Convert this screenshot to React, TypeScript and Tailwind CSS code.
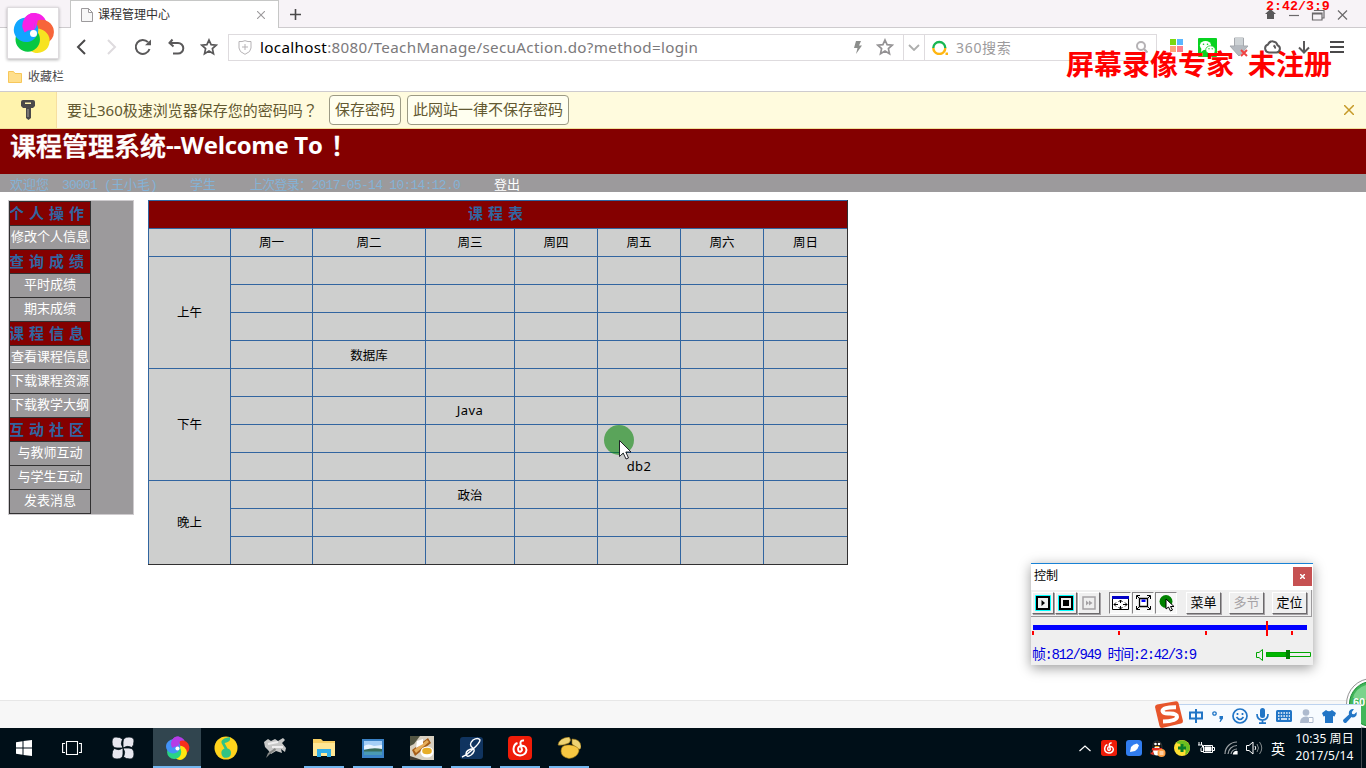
import React from "react";
import type { ReactNode } from "react";

const YAHEI = "font-['Noto_Sans','Noto_Sans_CJK_SC',sans-serif]";
const SONG = "font-['Liberation_Mono','Noto_Sans_CJK_SC',monospace]";

function Slot({ w, children }: { w: string; children?: ReactNode }) {
  return <div className={`${w} h-full shrink-0 flex items-center justify-center`}>{children}</div>;
}

/* Pinwheel logo: wide round petals, each lying over the one before it. */
function Pinwheel({ size, colors }: { size: number; colors: string[] }) {
  return (
    <svg width={size} height={size} viewBox="-22 -22 44 44">
      {colors.map((c, i) => (
        <circle key={c} cy="-8.5" r="12.5" fill={c} transform={`rotate(${8 + i * (360 / colors.length)})`} />
      ))}
      <path d="M0 -21 A12.500 12.500 0 0 0 -9 .2 Q-5 -4 0 -3 Z" fill={colors[0]} transform="rotate(8)" />
      <path d="M0 -21 Q5 -12 0 -3Z" fill={colors[0]} transform="rotate(8)" />
      <circle r="3.6" fill="#fff" />
    </svg>
  );
}

function Star({ color }: { color: string }) {
  return (
    <svg width="18" height="18" viewBox="0 0 18 18" fill="none" stroke={color} strokeWidth="1.7">
      <path d="M9 2 L11.1 6.7 L16.2 7.2 L12.4 10.6 L13.5 15.7 L9 13.1 L4.5 15.7 L5.6 10.6 L1.8 7.2 L6.9 6.7Z" />
    </svg>
  );
}

function TabStrip() {
  return (
    <div className="h-[28px] shrink-0 flex bg-[#f7f3f7]">
      <div className="w-[70px] border-b border-[#cecbce]" />
      <div className="w-[209px] bg-white border-t border-x border-[#c6c7c6] flex items-center pl-[10px]">
        <svg width="12" height="14" viewBox="0 0 12 14" fill="#f7f7f7" stroke="#9c9a9c">
          <path d="M.5 .5 H7.5 L11.5 4.5 V13.5 H.5Z M7.5 .5 V4.5 H11.5" />
        </svg>
        <span className={`${YAHEI} ml-[5px] w-[159px] text-[12px] text-[#313031]`}>课程管理中心</span>
        <svg className="mt-px" width="8" height="8" viewBox="0 0 8 8" stroke="#9c9a9c" strokeWidth="1.1"><path d="M0 0 L8 8 M8 0 L0 8" /></svg>
      </div>
      <div className="flex-1 border-b border-[#cecbce] flex items-center pl-[11px] pt-px">
        <svg width="11" height="11" viewBox="0 0 11 11" stroke="#4a494a" strokeWidth="1.6"><path d="M5.5 0 V11 M0 5.500 H11" /></svg>
        <div className="w-[964px]" />
        <svg className="mt-[2px]" width="84" height="14" viewBox="0 0 84 14" fill="none" stroke="#6b696b" strokeWidth="1.2">
          <path d="M0 6 L5.500 1 L11 6 H9 V11 H2 V6Z" fill="#5a595a" stroke="none" />
          <path d="M24 7.5 H34" />
          <path d="M47.5 5 H57 V12 H47.5Z M47.5 6 H57 M49.5 3 V2.5 H59 V10 H57.5" />
          <path d="M73 2.5 L82 11.5 M82 2.5 L73 11.5" />
        </svg>
      </div>
    </div>
  );
}

function Toolbar() {
  return (
    <div className="h-[38px] shrink-0 flex items-center pl-[66px]">
      <Slot w="w-[30px]"><svg width="12" height="16" viewBox="0 0 12 16" fill="none" stroke="#4a494a" strokeWidth="2"><path d="M10 1 L3 8 L10 15" /></svg></Slot>
      <Slot w="w-[31px]"><svg width="12" height="16" viewBox="0 0 12 16" fill="none" stroke="#dedbde" strokeWidth="2"><path d="M2 1 L9 8 L2 15" /></svg></Slot>
      <Slot w="w-[32px]">
        <svg width="18" height="18" viewBox="0 0 18 18" fill="none" stroke="#5a595a" strokeWidth="2"><path d="M15.5 11 A7 7 0 1 1 14 4.2" /><path d="M17 1.5 V7.2 H11Z" fill="#5a595a" stroke="none" /></svg>
      </Slot>
      <Slot w="w-[34px]">
        <svg width="18" height="18" viewBox="0 0 18 18" fill="none" stroke="#5a595a" strokeWidth="2"><path d="M5.5 1.5 L2.5 5 L6.5 8.5 M2.5 5 H11 A5.3 5.3 0 0 1 11 15.6 H6" /></svg>
      </Slot>
      <Slot w="w-[31px]"><Star color="#5a595a" /></Slot>
      <div className="ml-[4px] w-[929px] h-[27px] border border-[#dedbde] flex items-center">
        <Slot w="w-[31px]">
          <svg width="14" height="15" viewBox="0 0 14 15" fill="none" stroke="#b5b2b5"><path d="M1 1.5 Q4 2 7 .7 Q10 2 13 1.5 V8 Q13 12 7 14.3 Q1 12 1 8Z M4 7 H10 M7 4 V10" /></svg>
        </Slot>
        <div className={`${YAHEI} w-[583px] h-full flex items-center pb-px whitespace-nowrap text-[15.200px] tracking-[0.330px] leading-[24px] text-[#7b797b]`}>
          <span><span className="text-black">localhost</span>:8080/TeachManage/secuAction.do?method=login</span>
        </div>
        <Slot w="w-[30px]"><svg width="8" height="13" viewBox="0 0 8 13" fill="#8c8e8c"><path d="M2 0 H7 L5 4.5 H8 L2 13 L3.5 7 H0Z" /></svg></Slot>
        <Slot w="w-[24px]"><Star color="#949294" /></Slot>
        <div className="ml-[6px] w-[22px] h-full border-x border-[#dedbde] flex items-center justify-center">
          <svg width="12" height="7" viewBox="0 0 12 7" fill="none" stroke="#adaead" strokeWidth="1.8"><path d="M1 1 L6 6 L11 1" /></svg>
        </div>
        <Slot w="w-[30px]">
          <svg width="16" height="15" viewBox="0 0 16 15" fill="none" strokeWidth="2.4"><path d="M1.3 8 A6 6 0 1 1 13.3 8" stroke="#18b652" /><path d="M1.3 8 A6 6 0 0 0 13.3 8" stroke="#ffb610" /><path d="M13.5 12.5 H16 V15 H13.5Z" fill="#ffb610" /></svg>
        </Slot>
        <div className={`${YAHEI} w-[174px] h-full flex items-center pl-px text-[14px] tracking-[0.7px] text-[#9c9a9c]`}>360搜索</div>
        <Slot w="w-[25px]"><svg width="12" height="12" viewBox="0 0 12 12" fill="none" stroke="#b5b2b5" strokeWidth="2"><circle cx="5" cy="5" r="4" /><path d="M8 8 L11.5 11.5" /></svg></Slot>
      </div>
      <Slot w="w-[39px]">
        <svg className="mb-[3px]" width="14" height="14" viewBox="0 0 14 14"><path d="M0 0H6V6H0Z" fill="#7bd710" /><path d="M7 0H13V6H7Z" fill="#5ab6ff" /><path d="M0 7H6V13H0Z" fill="#ffa67b" /><path d="M7 7H13V13H7Z" fill="#ff7d8c" /></svg>
      </Slot>
      <Slot w="w-[23px]">
        <svg width="19" height="19" viewBox="0 0 19 19" fill="#fff"><rect width="19" height="19" rx="1" fill="#08d321" /><ellipse cx="7.5" cy="7.5" rx="5.6" ry="4.6" /><path d="M3.5 10 L3 14 L7 11Z" /><ellipse cx="12.5" cy="11.8" rx="4.8" ry="4" stroke="#08d321" strokeWidth=".8" /><path d="M14 14 L16 17 L16.5 13Z" /><g fill="#08d321"><circle cx="5.5" cy="6.3" r=".8" /><circle cx="9.5" cy="6.3" r=".8" /><circle cx="11" cy="10.8" r=".7" /><circle cx="14.2" cy="10.8" r=".7" /></g></svg>
      </Slot>
      <Slot w="w-[40px]">
        <svg width="20" height="20" viewBox="0 0 20 20"><path d="M5.5 1 H14.5 V9 H19 L10 19 L1 9 H5.5Z" fill="#b5bac0" stroke="#a5a8ad" /><path d="M6 1 H14 V8 H6Z" fill="#ced3d6" /><path d="M12 13 L18 19 M18 13 L12 19" stroke="#ef4142" strokeWidth="2" /></svg>
      </Slot>
      <Slot w="w-[27px]">
        <svg width="18" height="16" viewBox="0 0 18 16" fill="none" stroke="#5a595a" strokeWidth="2"><path d="M5 13.5 H12.5 A3.8 3.8 0 0 0 13.5 6.2 A5 5 0 0 0 4 5.5 A4.1 4.1 0 0 0 5 13.5Z M11 9.500 Q11.500 7.500 9.500 6.500" /></svg>
      </Slot>
      <Slot w="w-[36px]"><svg width="12" height="14" viewBox="0 0 12 14" fill="none" stroke="#5a595a" strokeWidth="2"><path d="M6 1 V12 M1 7.5 L6 12.5 L11 7.5" /></svg></Slot>
      <Slot w="w-[30px]"><svg width="14" height="12" viewBox="0 0 14 12" stroke="#4a494a" strokeWidth="2"><path d="M0 1 H14 M0 6 H14 M0 11 H14" /></svg></Slot>
    </div>
  );
}

function PasswordBar() {
  const btn = "h-[30px] rounded-[4px] border border-[#9c9a84] bg-[#fffff0] flex items-center justify-center pb-[2px]";
  return (
    <div className={`${YAHEI} h-[37px] shrink-0 flex items-center bg-[#fffbde] border-b border-[#efdf9c] text-[15px] text-[#635931]`}>
      <div className="w-[57px] h-full bg-[#fff3ad] border-r border-[#f7dfa0] flex items-center justify-center">
        <svg width="14" height="20" viewBox="0 0 14 20" fill="#4a494a"><path d="M2 0 H12 Q14 0 14 2 V6 L12 8 H10 V18 L7.500 20 L5 18 V8 H2 L0 6 V2 Q0 0 2 0Z" /><path d="M4 2.500 H10 V4 H4Z" fill="#fff3ad" /><path d="M7 9 V17" stroke="#a5a29c" /></svg>
      </div>
      <span className="w-[262px] pl-[10px] whitespace-nowrap">要让360极速浏览器保存您的密码吗<span className="font-['Noto_Sans_CJK_TC',sans-serif]">？</span></span>
      <div className={`${btn} w-[72px] ml-[10px]`}>保存密码</div>
      <div className={`${btn} w-[162px] ml-[6px]`}>此网站一律不保存密码</div>
      <div className="flex-1" />
      <svg className="mr-[12px]" width="10" height="10" viewBox="0 0 10 10" stroke="#c69a29" strokeWidth="1.5"><path d="M0 0 L10 10 M10 0 L0 10" /></svg>
    </div>
  );
}

const MENU: [string, string[]][] = [
  ["个人操作", ["修改个人信息"]],
  ["查询成绩", ["平时成绩", "期末成绩"]],
  ["课程信息", ["查看课程信息", "下载课程资源", "下载教学大纲"]],
  ["互动社区", ["与教师互动", "与学生互动", "发表消息"]],
];

function SideMenu() {
  return (
    <div className={`${SONG} w-[126px] h-[315px] bg-[#9c9a9c] border border-[#cecbce]`}>
      <div className="w-[82px] border-t border-x border-[#313031]">
        {MENU.map(([head, items]) => (
          <div key={head}>
            <div className="h-[24px] pt-[2px] bg-[#840000] border-b border-[#313031] text-[15px] leading-[24px] font-bold tracking-[5px] text-[#3165a0] whitespace-nowrap overflow-hidden"><span className="-ml-px">{head}</span></div>
            {items.map((t) => (
              <div key={t} className="h-[24px] pt-px border-b border-[#313031] text-center text-[13px] leading-[22px] text-white whitespace-nowrap">{t}</div>
            ))}
          </div>
        ))}
      </div>
    </div>
  );
}

const DAYS = ["周一", "周二", "周三", "周四", "周五", "周六", "周日"];
const PARTS: { name: string; span: string; rows: string[][] }[] = [
  { name: "上午", span: "row-span-4", rows: [[], [], [], ["", "数据库"]] },
  { name: "下午", span: "row-span-4", rows: [[], ["", "", "Java"], [], ["", "", "", "", "db2"]] },
  { name: "晚上", span: "row-span-3", rows: [["", "", "政治"], [], []] },
];

function Timetable() {
  const cell = "border-l border-t border-[#3165a0] flex items-center justify-center";
  return (
    <div className="ml-[14px] grid w-[700px] h-[365px] grid-cols-[82px_82px_113px_89px_83px_83px_83px_84px] auto-rows-[28px] border-r border-b border-[#313031] bg-[#cecfce] font-['DejaVu_Sans','Noto_Sans_CJK_SC',sans-serif] text-[12.5px] text-black">
      <div className={`${cell} pb-px col-span-8 bg-[#840000] text-[15px] font-bold tracking-[5px] text-[#3165a0]`}>课程表</div>
      <div className={cell} />
      {DAYS.map((d) => <div key={d} className={`${cell} pt-px`}>{d}</div>)}
      {PARTS.map((p) => (
        <React.Fragment key={p.name}>
          <div className={`${cell} pt-px ${p.span}`}>{p.name}</div>
          {p.rows.map((r, i) => DAYS.map((d, j) => {
            const t = r[j] || "";
            return <div key={`${i}${d}`} className={`${cell} ${/^[A-Za-z]/.test(t) ? "text-[13px] font-['Noto_Sans',sans-serif] tracking-[0.4px]" : "pt-[3px]"}`}>{t}</div>;
          }))}
        </React.Fragment>
      ))}
    </div>
  );
}

const raised = "border border-t-white border-l-white border-r-[#6b696b] border-b-[#6b696b] shadow-[1px_1px_0_#a5a2a5]";
const sunken = "border border-t-[#848284] border-l-[#848284] border-r-white border-b-white bg-[#f7f7f7]";

function Recorder() {
  const tb = "w-[22px] h-[22px] mr-px flex items-center justify-center";
  const wide = "w-[35px] h-[22px] flex items-center justify-center pt-[2px] text-[13px]";
  return (
    <div className={`${SONG} absolute left-[1031px] top-[563px] w-[282px] h-[102px] flex flex-col bg-[#efefef] border-t border-[#1882d6] shadow-[0_3px_12px_rgba(0,0,0,0.4)]`}>
      <div className={`${YAHEI} h-[26px] shrink-0 bg-white flex items-center justify-between pl-[3px] pr-px pb-[2px] text-[12px] text-black`}>
        <span>控制</span>
        <div className="w-[19px] h-[19px] bg-[#c65152] flex items-center justify-center">
          <svg width="5" height="5" viewBox="0 0 5 5" stroke="#fff" strokeWidth="1.500"><path d="M0 0 L5 5 M5 0 L0 5" /></svg>
        </div>
      </div>
      <div className="h-[27px] shrink-0 mr-px flex items-center pl-px pb-px border-b border-r border-[#9c9a9c] text-black">
        <div className={`${tb} ${raised}`}><svg width="16" height="16" viewBox="0 0 16 16" fill="none" stroke="#000" strokeWidth="2"><path d="M.5 .5H15.500V15.500H.5Z" stroke="#0ff" strokeWidth="1" /><path d="M2 2H14V14H2Z" /><path d="M6.500 5 L10 8 L6.500 11Z" fill="#000" stroke="none" /></svg></div>
        <div className={`${tb} ${raised}`}><svg width="16" height="16" viewBox="0 0 16 16" fill="none" stroke="#000" strokeWidth="2"><path d="M.5 .5H15.500V15.500H.5Z" stroke="#0ff" strokeWidth="1" /><path d="M2 2H14V14H2Z" /><path d="M5 5 H11 V11 H5Z" fill="#000" stroke="none" /></svg></div>
        <div className={`${tb} ${raised}`}><svg width="16" height="16" viewBox="0 0 16 16" fill="none" stroke="#a5a2a5" strokeWidth="1.500"><path d="M2 2H14V14H2Z" /><path d="M5 5.500 L8 8 L5 10.500Z M8 5.500 L11.500 8 L8 10.500Z" fill="#a5a2a5" stroke="none" /></svg></div>
        <div className={`${tb} ${sunken} ml-[8px]`}><svg width="17" height="14" viewBox="0 0 17 14" fill="none" stroke="#000" strokeWidth="1"><path d="M.5 .5 H16.500 V13.500 H.5Z" fill="#fff" /><path d="M0 0 H17 V3 H0Z" fill="#0000c6" stroke="none" /><path d="M8.500 4 V7 M8.500 10 V13 M2 8.500 H6 M11 8.500 H15 M4 6.500 L2 8.500 L4 10.500 M13 6.500 L15 8.500 L13 10.500 M6.500 6 L8.500 4 L10.500 6 M6.500 11 L8.500 13 L10.500 11" /></svg></div>
        <div className={`${tb} ${sunken}`}><svg width="15" height="15" viewBox="0 0 15 15" fill="none" stroke="#000" strokeWidth="1"><path d="M3.500 3.500 H11.500 V11.500 H3.500Z" fill="#fff" strokeWidth="1.300" /><path d="M5.500 4.500H9.500V7H5.500Z" fill="#00f" stroke="none" /><path d="M.5 4 V.5 H4 M11 .5 H14.500 V4 M14.500 11 V14.500 H11 M4 14.500 H.5 V11 M1 1 L3 3 M14 1 L12 3 M1 14 L3 12 M14 14 L12 12" /></svg></div>
        <div className={`${tb} ${sunken}`}><svg className="ml-px" width="18" height="18" viewBox="0 0 18 18"><circle cx="8" cy="7.500" r="6.500" fill="#008200" /><path d="M8 5 V15 L10.500 13 L12.500 17 L14.500 16 L12.500 12.500 H16Z" fill="#fff" stroke="#000" /></svg></div>
        <div className={`${wide} ${raised} ml-[8px]`}>菜单</div>
        <div className={`${wide} ${raised} ml-[8px] text-[#a5a2a5]`}>多节</div>
        <div className={`${wide} ${raised} ml-[8px]`}>定位</div>
      </div>
      <svg className="mt-[4px] ml-px shrink-0" width="278" height="16" viewBox="0 0 278 16">
        <path d="M1 4H275V9H1Z" fill="#00f" />
        <path d="M0 10H2V14H0Z M86 10H88V14H86Z M173 10H175V14H173Z M259 10H261V14H259Z M234 0H236V15H234Z" fill="#f00" />
      </svg>
      <div className="flex-1 flex items-center justify-between pl-px pr-[2px] pt-[7px]">
        <span className="text-[14px] tracking-[-1.4px] text-[#0000e0] whitespace-pre leading-none">帧:812/949 时间:2:42/3:9</span>
        <svg width="55" height="12" viewBox="1 0 55 12" fill="none" stroke="#00a600"><path d="M1.500 3.500 H4 L7.500 .5 V11.500 L4 8.500 H1.500Z" /><path d="M11.500 3.500H55.500V7.500H11.500Z" /><path d="M11.500 3.500H31V7.500H11.500Z" fill="#00b600" /><path d="M31 1H35V10H31Z" fill="#008200" stroke="none" /></svg>
      </div>
    </div>
  );
}

function ImeBar() {
  return (
    <>
      <svg className="absolute left-[1344px] top-[676px]" width="22" height="52" viewBox="0 0 22 52">
        <circle cx="28" cy="28" r="25.500" fill="#fff" stroke="#949294" />
        <circle cx="28" cy="28" r="22.500" fill="#42b65a" stroke="#188a31" />
        <path d="M9 22 A20 18 0 0 1 22 9 V24Z" fill="#7bd38c" />
        <text x="9" y="30" fontSize="11" fill="#fff" fontWeight="bold" fontFamily="Liberation Sans">60</text>
      </svg>
      <div className="absolute left-[1160px] top-[704px] w-[201px] h-[24px] flex items-center bg-[#f7fbff] border-t border-[#bdd3ef] pl-[25px] pb-px text-[#2175c6]">
        <Slot w="w-[22px]"><svg width="14" height="14" viewBox="0 0 14 14" fill="none" stroke="currentColor" strokeWidth="2"><path d="M1 3.500H13V9.500H1Z M7 0V14" /></svg></Slot>
        <Slot w="w-[22px]"><svg width="12" height="12" viewBox="0 0 12 12" fill="none" stroke="currentColor" strokeWidth="1.300"><circle cx="2.500" cy="3.500" r="1.700" /><path d="M7.500 6 H11 V8.500 L8.500 12 H7.500 L8.500 9 H7.500Z" fill="currentColor" stroke="none" /></svg></Slot>
        <Slot w="w-[22px]"><svg width="16" height="16" viewBox="0 0 16 16" fill="none" stroke="currentColor" strokeWidth="1.700"><circle cx="8" cy="8" r="7" /><path d="M4.500 9 Q8 14 11.500 9 M5.500 5 V7 M10.500 5 V7" /></svg></Slot>
        <Slot w="w-[22px]"><svg width="13" height="16" viewBox="0 0 13 16" fill="none" stroke="currentColor" strokeWidth="1.700"><rect x="4" y="0" width="5" height="10" rx="2.500" fill="currentColor" stroke="none" /><path d="M1 6 Q1 12 6.500 12 Q12 12 12 6 M6.500 12 V15 M3 15.200H10" /></svg></Slot>
        <Slot w="w-[22px]"><svg width="16" height="12" viewBox="0 0 16 12"><rect width="16" height="12" rx="1.500" fill="currentColor" /><path d="M2 3H14 M2 6H14" stroke="#fff" strokeWidth="1.500" strokeDasharray="1.500 1.200" /><path d="M2 9H3.500 M5 9H11 M12.500 9H14" stroke="#fff" strokeWidth="1.500" /></svg></Slot>
        <Slot w="w-[23px]"><svg width="14" height="15" viewBox="0 0 14 15" fill="#adbace"><circle cx="6" cy="3.500" r="3.300" /><path d="M0 14 Q0 7.500 6 7.500 Q8 7.500 8 8 V14Z" /><path d="M8.500 8.500H13V13.500H8.500Z" fill="#fff" stroke="#adbace" /></svg></Slot>
        <Slot w="w-[21px]"><svg width="14" height="13" viewBox="0 0 14 13" fill="currentColor"><path d="M4 0 Q7 2.500 10 0 L14 3 L12.500 6.500 L11 6 V13 H3 V6 L1.500 6.500 L0 3Z" /></svg></Slot>
        <Slot w="w-[21px]"><svg width="14" height="14" viewBox="0 0 14 14" fill="currentColor"><path d="M0 11 L6 5.500 Q5 1 9.500 0 L11 .2 L8.800 3 L9.200 5 L11.200 5.200 L13.600 3 Q14.500 8 9.500 8.500 L8.500 8 L3 14 Q0 14.500 0 11Z" /></svg></Slot>
      </div>
      <svg className="absolute left-[1155px] top-[701px]" width="29" height="27" viewBox="0 0 29 27">
        <path d="M0 6 Q0 4 2 3.500 L21 .2 Q23 0 23.500 2 L28 20 Q28 22 26 22.500 L7 27 Q5 27 4.500 25Z" fill="#e7552b" />
        <path d="M21 6.300 Q7.500 6 7.500 10 Q8 13 15 12.500 Q22 12.500 22 16 Q21.500 20 8 20.500" fill="none" stroke="#fff" strokeWidth="4" />
      </svg>
    </>
  );
}

function TaskItem({ bar, active, children }: { bar?: boolean; active?: boolean; children: ReactNode }) {
  return (
    <div className={`w-[48px] h-full mr-px flex flex-col items-center ${active ? "bg-[#31454f]" : ""}`}>
      <div className="h-[38px] flex items-center pt-[2px]">{children}</div>
      <div className={`h-[2px] ${active ? "w-full bg-[#73b6ef]" : bar ? "w-[40px] bg-[#73b6ef]" : "w-0"}`} />
    </div>
  );
}

function Taskbar() {
  return (
    <div className="h-[40px] shrink-0 flex bg-[#000f18] text-white">
      <TaskItem><svg width="16" height="16" viewBox="0 0 16 16" fill="#fff"><path d="M0 2.200 L6.500 1.300 V7.500 H0Z M7.500 1.100 L16 0 V7.500 H7.500Z M0 8.500 H6.500 V14.700 L0 13.800Z M7.500 8.500 H16 V16 L7.500 14.900Z" /></svg></TaskItem>
      <TaskItem><svg className="mr-[2px]" width="20" height="14" viewBox="0 0 20 14" fill="none" stroke="#fff" strokeWidth="1.100"><path d="M4.500 .5 H15.500 V13.500 H4.500Z M3 2.500 H.6 V11.500 H3 M17 2.500 H19.400 V11.500 H17" /></svg></TaskItem>
      <TaskItem>
        <svg className="ml-px" width="22" height="22" viewBox="0 0 22 22" fill="#e7e7ef" stroke="#000f18" strokeWidth=".8">
          {[0, 90, 180, 270].map((r) => <path key={r} d="M11 11 Q8 7 10.500 2 Q8 0 4 0 Q0 0 0 5 Q0 11 5 11Z" transform={`rotate(${r} 11 11)`} />)}
        </svg>
      </TaskItem>
      <div className="w-[6px]" />
      <TaskItem active><Pinwheel size={25} colors={["#b53ce7", "#f7301c", "#ffe710", "#29d384", "#4292f7"]} /></TaskItem>
      <TaskItem><svg width="24" height="24" viewBox="0 0 24 24"><circle cx="12" cy="12" r="11.500" fill="#ffd31c" /><path d="M7.500 5 Q9 2 16 1 V4 Q15 6 10.500 7 L13.500 12.500 Q17 13 17 17 A4.800 4.800 0 1 1 10.500 12.500 L7.500 7Z" fill="#31c384" /></svg></TaskItem>
      <TaskItem><svg width="24" height="22" viewBox="0 0 24 22"><path d="M1 5 L5 2 L8 4 L12 2 L15 4 L20 1 L22 3 L19 6 L23 11 L22 15 L18 12 L19 16 L13 14 L8 17 L5 13 L2 10Z" fill="#c6c7c6" /><path d="M3 21 L5 16 L12 11 L13 13 L7 17Z" fill="#848684" /><path d="M5 7 L15 5 M9 10 L20 10" stroke="#efefef" strokeWidth="2" /></svg></TaskItem>
      <TaskItem bar><svg width="22" height="20" viewBox="0 0 22 20"><path d="M0 1 H8 L10 3 H22 V18 H0Z" fill="#f7cf63" /><path d="M0 5 H22 V18 H0Z" fill="#ffe794" /><path d="M4 19 V11 H18 V19 H14 V15 H8 V19Z" fill="#31aee7" /></svg></TaskItem>
      <TaskItem bar><svg width="22" height="19" viewBox="0 0 22 19"><path d="M0 0H22V19H0Z" fill="#3a82c6" /><path d="M2 2H20V16H2Z" fill="#a5cff7" /><path d="M2 7 Q6 4 12 7 L20 6 V10 H2Z" fill="#e7f3ff" /><path d="M2 11 Q11 8 20 10 V13 H2Z" fill="#396d5a" /><path d="M2 12.500H20V16H2Z" fill="#4a9ab5" /></svg></TaskItem>
      <TaskItem bar><svg width="24" height="24" viewBox="0 0 24 24"><path d="M0 0H24V24H0Z" fill="#d6cfc0" /><path d="M0 0H10L4 8L0 10Z" fill="#525542" /><path d="M2 14 L18 2 L21 7 L5 20Z" fill="#a55d18" /><path d="M4 14 L17 4 L19 6 L6 17Z" fill="#e7ae5a" /><path d="M7 5 L13 3 L13 8 L6 12Z" fill="#fff" /><ellipse cx="17" cy="16" rx="6.500" ry="5.500" fill="#fff" /><ellipse cx="17" cy="15" rx="4.800" ry="3.200" fill="#e7ae29" /><path d="M0 20 L12 24 H0Z" fill="#423c31" /></svg></TaskItem>
      <TaskItem bar><svg width="23" height="22" viewBox="0 0 23 22"><rect width="23" height="22" rx="3" fill="#10345f" /><path d="M2 20 Q7 18 12 13 Q20 6 20 3 Q18 0 13 3 Q8 8 13 11 Q16 14 11 18 Q7 21 6 17 Q6 13 13 11.500" fill="none" stroke="#fff" strokeWidth="1.400" /></svg></TaskItem>
      <TaskItem bar><svg width="24" height="24" viewBox="0 0 24 24"><rect width="24" height="24" rx="4" fill="#ef1c08" /><path d="M16 4.500 Q12 4 12.500 8 L14 14 Q12.500 17 10.500 15 Q9 11 12.500 10 Q18 9 18.500 14 Q18 19 12 19.500 Q5.500 19 5.500 13 Q6 8 9.500 7" fill="none" stroke="#fff" strokeWidth="2" /></svg></TaskItem>
      <TaskItem bar><svg width="24" height="22" viewBox="0 0 24 22" stroke="#9c7510" strokeWidth=".6"><path d="M1 8 Q2 1 12 0 Q15 3 12 6 Q5 9 1 8Z" fill="#efd373" /><path d="M15 2 Q23 2 24 9 Q24 13 21 12 L15 7Z" fill="#efd373" /><path d="M4 14 Q4 7 13 8 Q22 9 22 14 Q20 21 12 21.500 Q4 20 4 14Z" fill="#f7c742" /></svg></TaskItem>
      <div className="flex-1" />
      <Slot w="w-[24px]"><svg width="12" height="7" viewBox="0 0 12 7" fill="none" stroke="#fff" strokeWidth="1.200"><path d="M.5 6 L6 1 L11.500 6" /></svg></Slot>
      <Slot w="w-[24px]"><svg width="16" height="16" viewBox="0 0 24 24"><rect width="24" height="24" rx="4" fill="#ef1c08" /><path d="M16 4.500 Q12 4 12.500 8 L14 14 Q12.500 17 10.500 15 Q9 11 12.500 10 Q18 9 18.500 14 Q18 19 12 19.500 Q5.500 19 5.500 13 Q6 8 9.500 7" fill="none" stroke="#fff" strokeWidth="2.200" /></svg></Slot>
      <Slot w="w-[25px]"><svg width="16" height="16" viewBox="0 0 16 16"><rect width="16" height="16" rx="3" fill="#317def" /><path d="M4 12 L5 7 Q7 4 11 3.500 L13 5.500 Q12 9 9 11Z" fill="#fff" /></svg></Slot>
      <Slot w="w-[24px]"><svg width="16" height="17" viewBox="0 0 16 17"><path d="M3 8 Q2 1 7 1 Q12 1 12 8 L14 12 L11 15 H3 L0 12Z" fill="#101010" stroke="#525552" strokeWidth=".5" /><ellipse cx="7" cy="11" rx="4" ry="4.500" fill="#fff" /><circle cx="5.500" cy="4" r="1.300" fill="#fff" /><circle cx="9" cy="4" r="1.300" fill="#fff" /><path d="M4 6 H10 L7 7.500Z" fill="#ffa618" /><path d="M2 8 H12 V10.500 H2Z M0 14 L3 11 L4 15Z" fill="#e73021" /><circle cx="11.500" cy="13" r="4" fill="#ff9e42" /><path d="M9.500 12H13.500 M9.500 14H13.500" stroke="#fff" /></svg></Slot>
      <Slot w="w-[24px]"><svg width="16" height="16" viewBox="0 0 16 16"><circle cx="8" cy="8" r="8" fill="#ffdf31" /><path d="M2 3 A8 8 0 0 1 16 8 Q15 13 11 15 Q14 5 2 3Z" fill="#6bbe21" /><path d="M8 4V12 M4 8H12" stroke="#087d29" strokeWidth="3" /></svg></Slot>
      <Slot w="w-[25px]"><svg width="17" height="12" viewBox="0 0 17 12" fill="none" stroke="#fff"><path d="M5.500 3.500H14.500V10.500H5.500Z M15 5.500H16.500V8.500H15" /><path d="M7 5H13V9H7Z" fill="#fff" /><path d="M1 0V3 M3.500 0V3 M0 3H4.500V5 L3 6.500V9.500H5" /></svg></Slot>
      <Slot w="w-[24px]"><svg width="14" height="14" viewBox="0 0 14 14" fill="none" stroke="#9ca2a5" strokeWidth="1.200"><path d="M1 13 A12 12 0 0 1 13 1 M4 13 A9 9 0 0 1 13 4.500 M7 13 A6 6 0 0 1 13 8" /><path d="M9.500 13 A3 3 0 0 1 13 10.500 V13Z" fill="#fff" stroke="#fff" /></svg></Slot>
      <Slot w="w-[23px]"><svg width="17" height="14" viewBox="0 0 17 14" fill="none" stroke="#fff"><path d="M.5 4.500H3L7 1V13L3 9.500H.5Z M9 5 Q10.500 7 9 9" /><path d="M11 3 Q14 7 11 11 M13.500 1 Q18 7 13.500 13" stroke="#848a8c" /></svg></Slot>
      <Slot w="w-[24px]"><span className={`${YAHEI} text-[14px]`}>英</span></Slot>
      <div className={`${YAHEI} w-[71px] flex flex-col items-center justify-center pr-[2px] pb-[2px] text-[12px] leading-[17px] tracking-[0.1px] whitespace-nowrap`}>
        <span>10:35 周日</span>
        <span>2017/5/14</span>
      </div>
      <div className="w-[5px] border-l border-[#42494f]" />
    </div>
  );
}

export default function App() {
  return (
    <div className="relative w-[1366px] h-[768px] overflow-hidden flex flex-col bg-white">
      <TabStrip />
      <Toolbar />
      <div className={`${YAHEI} h-[26px] shrink-0 border-b border-[#cecbce] flex items-center pl-[8px] pb-[4px] text-[12px] text-[#4a494a]`}>
        <svg className="mr-[6px]" width="14" height="12" viewBox="0 0 14 12" fill="#ffdf8c" stroke="#f7c75a"><path d="M.5 .5H5.500L7 2.500H13.500V11.500H.5Z" /></svg>
        收藏栏
      </div>
      <PasswordBar />
      <div className="h-[45px] shrink-0 bg-[#840000] pl-[10px] flex items-start whitespace-pre text-[26px] leading-[31px] font-medium text-white">
        <span className="font-['Noto_Sans_CJK_SC',sans-serif] [-webkit-text-stroke:0.5px_white]">课程管理系统</span>
        <span className="w-[158px] font-['Open_Sans',sans-serif] text-[24px] font-bold tracking-[-0.3px]">--Welcome To</span>
        <span className="font-['Noto_Sans_CJK_TC',sans-serif] [-webkit-text-stroke:0.5px_white]">！</span>
      </div>
      <div className={`${SONG} h-[18px] shrink-0 flex items-start pt-[4px] overflow-hidden bg-[#9c9a9c] pl-[10px] text-[13px] leading-[16px] tracking-[-0.8px] text-[#84b2d6] whitespace-pre`}>
        <span className="w-[52px] tracking-normal">欢迎您</span>
        <span className="w-[128px]">30001 (<span className="tracking-normal">王小毛</span>)</span>
        <span className="w-[60px] tracking-normal">学生</span>
        <span className="w-[244px] tracking-[-0.720px]">上次登录：2017-05-14 10:14:12.0</span>
        <span className="text-white tracking-normal">登出</span>
      </div>
      <div className="flex-1 flex items-start pl-[8px] pt-[8px]">
        <SideMenu />
        <Timetable />
      </div>
      <div className="h-[28px] shrink-0 bg-[#f7f7f7] border-t border-[#e7e7e7]" />
      <Taskbar />

      <div className="absolute left-[7px] top-[7px] w-[52px] h-[52px] bg-white border border-[#dedbde] shadow-[0_1px_3px_rgba(0,0,0,0.3)] flex items-center justify-center">
        <Pinwheel size={43} colors={["#f721e7", "#f7653a", "#f7e321", "#08c742", "#10a6ff"]} />
      </div>
      <div className="absolute left-[1266px] top-[-1px] font-['Liberation_Mono',monospace] text-[13.3px] leading-[15px] font-bold text-[#f00]">2:42/3:9</div>
      <div className="absolute left-[1066px] top-[43px] flex gap-[14px] whitespace-nowrap font-['Noto_Sans_CJK_SC',sans-serif] text-[28px] leading-[40px] font-bold text-[#f00]">
        <span>屏幕录像专家</span><span>未注册</span>
      </div>
      <svg className="absolute left-[604px] top-[425px]" width="32" height="36" viewBox="0 0 32 36">
        <circle cx="15" cy="15" r="15" fill="#008200" fillOpacity=".56" />
        <path d="M15.500 15.500 V31.500 L19.200 28 L22 34 L24.500 33 L21.800 27 H27Z" fill="#fff" stroke="#101018" strokeWidth=".9" />
      </svg>
      <ImeBar />
      <Recorder />
    </div>
  );
}
